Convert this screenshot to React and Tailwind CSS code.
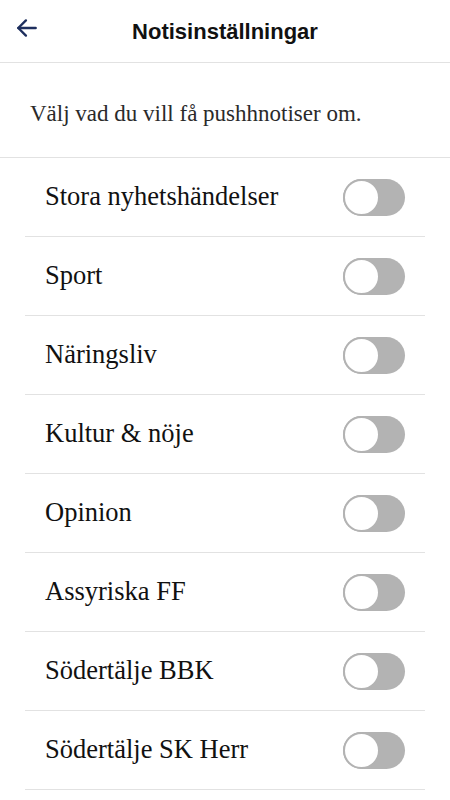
import React, { useState } from 'react'

const topics = [
  'Stora nyhetshändelser',
  'Sport',
  'Näringsliv',
  'Kultur & nöje',
  'Opinion',
  'Assyriska FF',
  'Södertälje BBK',
  'Södertälje SK Herr',
]

function Toggle({ on, onChange }) {
  return (
    <button
      onClick={onChange}
      className={`relative w-[62px] h-[37px] rounded-full shrink-0 ${on ? 'bg-[#1e2f5e]' : 'bg-[#b3b3b3]'}`}
    >
      <span
        className={`absolute top-0 w-[37px] h-[37px] rounded-full bg-white border-[2.5px] ${on ? 'right-0 border-[#1e2f5e]' : 'left-0 border-[#b3b3b3]'}`}
      />
    </button>
  )
}

export default function App() {
  const [enabled, setEnabled] = useState({})

  return (
    <div className="w-[450px] min-h-[800px] bg-white">
      <header className="relative h-[63px] flex items-center justify-center border-b border-[#e2e2e2]">
        <button className="absolute left-[14px] top-[15px] text-[#1e2f5e]">
          <svg width="26" height="26" viewBox="0 0 24 24" fill="none" stroke="currentColor" strokeWidth="2.2" strokeLinecap="round" strokeLinejoin="round">
            <path d="M20 12H4" />
            <path d="M11 5l-7 7 7 7" />
          </svg>
        </button>
        <h1 className="text-[22px] font-bold text-[#111] font-['Liberation_Sans',sans-serif]">
          Notisinställningar
        </h1>
      </header>

      <div className="h-[95px] flex items-center pt-[8px] px-[30px] border-b border-[#e2e2e2]">
        <p className="text-[23px] text-[#2a2a2a] font-['Liberation_Serif',serif]">
          Välj vad du vill få pushhnotiser om.
        </p>
      </div>

      <ul className="px-[25px]">
        {topics.map((t) => (
          <li key={t} className="h-[79px] flex items-center justify-between px-5 border-b border-[#e2e2e2]">
            <span className="text-[26.5px] text-[#111] font-['Liberation_Serif',serif]">{t}</span>
            <Toggle
              on={!!enabled[t]}
              onChange={() => setEnabled((p) => ({ ...p, [t]: !p[t] }))}
            />
          </li>
        ))}
      </ul>
    </div>
  )
}
